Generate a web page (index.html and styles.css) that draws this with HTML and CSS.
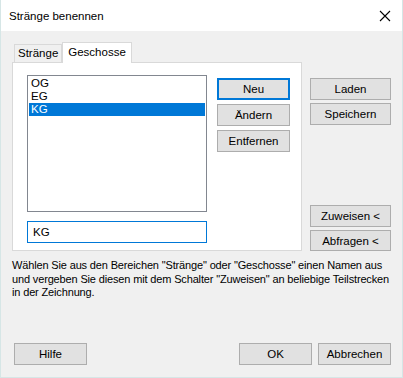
FILE: index.html
```html
<!DOCTYPE html>
<html lang="de">
<head>
    <meta charset="UTF-8">
    <title>Stränge benennen</title>
    <link rel="stylesheet" href="styles.css">
</head>
<body>
    <div class="window">
        <div class="titlebar">
            <span class="title">Stränge benennen</span>
            <svg class="close" width="12" height="12" viewBox="0 0 12 12">
                <path d="M1 1 L11 11 M11 1 L1 11" stroke="#000" stroke-width="1.1" fill="none"/>
            </svg>
        </div>

        <div class="content">
            <div class="tabs">
                <div class="tab">Stränge</div>
                <div class="tab active">Geschosse</div>
            </div>

            <div class="main">
                <div class="panel">
                    <div class="list-col">
                        <div class="listbox">
                            <div class="item">OG</div>
                            <div class="item">EG</div>
                            <div class="item selected">KG</div>
                        </div>
                        <div class="textbox">KG</div>
                    </div>
                    <div class="btn-col">
                        <button class="btn default">Neu</button>
                        <button class="btn">Ändern</button>
                        <button class="btn">Entfernen</button>
                    </div>
                </div>

                <div class="side-col">
                    <div class="side-top">
                        <button class="btn">Laden</button>
                        <button class="btn">Speichern</button>
                    </div>
                    <div class="side-bottom">
                        <button class="btn">Zuweisen &lt;</button>
                        <button class="btn">Abfragen &lt;</button>
                    </div>
                </div>
            </div>

            <p class="hint"><span class="line">Wählen Sie aus den Bereichen "Stränge" oder "Geschosse" einen Namen aus</span> <span class="line">und vergeben Sie diesen mit dem Schalter "Zuweisen" an beliebige Teilstrecken</span> <span class="line">in der Zeichnung.</span></p>

            <div class="footer">
                <button class="btn">Hilfe</button>
                <div class="footer-right">
                    <button class="btn">OK</button>
                    <button class="btn">Abbrechen</button>
                </div>
            </div>
        </div>
    </div>
</body>
</html>
```

FILE: styles.css
```css
* {
    box-sizing: border-box;
}

html, body {
    margin: 0;
    padding: 0;
}

body {
    font-family: "Liberation Sans", Arial, sans-serif;
    font-size: 11.5px;
    color: #000;
}

.window {
    width: 403px;
    height: 378px;
    border: 1px solid #d6e6e6;
    border-top: none;
    background: #f0f0f0;
    display: flex;
    flex-direction: column;
}

.titlebar {
    height: 31px;
    background: #fff;
    display: flex;
    align-items: center;
    justify-content: space-between;
    padding: 0 11px 0 8px;
}

.title {
    line-height: 16px;
}

.close {
    display: block;
}

.content {
    flex: 1;
    padding: 11px 0 0 11px;
    display: flex;
    flex-direction: column;
}

/* tabs */
.tabs {
    display: flex;
    align-items: flex-end;
    height: 20px;
    padding-left: 2px;
}

.tab {
    height: 18px;
    line-height: 17px;
    padding: 0 3px;
    border: 1px solid #d9d9d9;
    border-bottom: none;
    background: #f0f0f0;
}

.tab.active {
    height: 21px;
    margin-bottom: -1px;
    padding: 1px 5px 0;
    background: #fff;
    position: relative;
    z-index: 1;
}

.main {
    display: flex;
    gap: 8px;
}

.panel {
    width: 290px;
    height: 189px;
    background: #fff;
    border: 1px solid #d9d9d9;
    display: flex;
    padding: 12px 0 0 14px;
    gap: 10px;
}

.list-col {
    display: flex;
    flex-direction: column;
    gap: 9px;
}

.listbox {
    width: 180px;
    height: 137px;
    border: 1px solid #828790;
    padding: 1px;
}

.item {
    height: 13px;
    line-height: 13px;
    padding-left: 2px;
}

.item.selected {
    background: #0078d7;
    color: #fff;
}

.textbox {
    width: 180px;
    height: 22px;
    border: 1px solid #0078d7;
    line-height: 20px;
    padding-left: 5px;
}

.btn-col {
    display: flex;
    flex-direction: column;
    gap: 4px;
    padding-top: 3px;
}

/* buttons */
.btn {
    font-family: inherit;
    font-size: inherit;
    color: #000;
    width: 73px;
    height: 22px;
    padding: 0;
    margin: 0;
    background: #e1e1e1;
    border: 1px solid #adadad;
    line-height: 18px;
}

.btn.default {
    border: 2px solid #0078d7;
}

.side-col {
    width: 81px;
    display: flex;
    flex-direction: column;
    justify-content: space-between;
    padding-top: 16px;
}

.side-top,
.side-bottom {
    display: flex;
    flex-direction: column;
    gap: 3px;
}

.side-col .btn {
    width: 81px;
}

.side-bottom .btn + .btn {
    height: 21px;
}

.hint {
    margin: 8px 0 0 0;
    font-size: 11px;
    letter-spacing: -0.15px;
    line-height: 13.5px;
}

.line {
    display: block;
    white-space: nowrap;
}

.footer {
    margin-top: auto;
    margin-bottom: 12px;
    display: flex;
    justify-content: space-between;
    padding: 0 11px 0 2px;
}

.footer-right {
    display: flex;
    gap: 6px;
}
```
